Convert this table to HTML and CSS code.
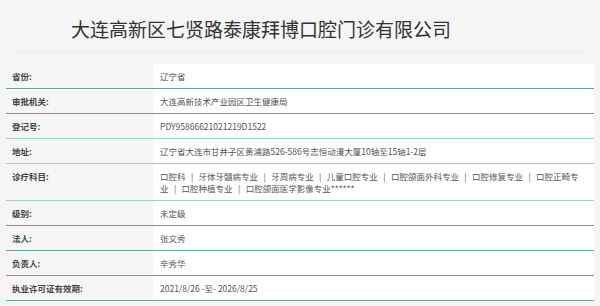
FILE: index.html
```html
<!DOCTYPE html>
<html lang="zh-CN">
<head>
<meta charset="utf-8">
<title>大连高新区七贤路泰康拜博口腔门诊有限公司</title>
<link rel="stylesheet" href="styles.css">
</head>
<body>
<div class="page">
  <header class="head">
    <h1 class="title">大连高新区七贤路泰康拜博口腔门诊有限公司</h1>
  </header>
  <table class="info">
    <tr><th>省份:</th><td>辽宁省</td></tr>
    <tr><th>审批机关:</th><td>大连高新技术产业园区卫生健康局</td></tr>
    <tr class="soft"><th>登记号:</th><td>PDY95866621021219D1522</td></tr>
    <tr class="soft"><th>地址:</th><td>辽宁省大连市甘井子区黄浦路526-586号志恒动漫大厦10轴至15轴1-2层</td></tr>
    <tr class="soft"><th>诊疗科目:</th><td>口腔科<span class="sep">|</span>牙体牙髓病专业<span class="sep">|</span>牙周病专业<span class="sep">|</span>儿童口腔专业<span class="sep">|</span>口腔颌面外科专业<span class="sep">|</span>口腔修复专业<span class="sep">|</span>口腔正畸专业<span class="sep">|</span>口腔种植专业<span class="sep">|</span>口腔颌面医学影像专业******</td></tr>
    <tr><th>级别:</th><td>未定级</td></tr>
    <tr><th>法人:</th><td>张文秀</td></tr>
    <tr><th>负责人:</th><td>辛秀华</td></tr>
    <tr><th>执业许可证有效期:</th><td>2021/8/26 -至- 2026/8/25</td></tr>
  </table>
</div>
</body>
</html>
```

FILE: styles.css
```css
html, body {
  margin: 0;
  padding: 0;
  background: #f5f5f5;
}
body {
  font-family: "Noto Sans CJK SC", "Noto Sans", sans-serif;
  color: #333;
}
.page {
  padding: 0 6px;
}
.head {
  margin: 0 10px;
  height: 51px;
  border-bottom: 1px solid #ececec;
  display: flex;
  align-items: center;
  justify-content: center;
  padding-right: 78px;
}
.title {
  margin: 0;
  font-size: 19px;
  line-height: 22px;
  font-weight: 400;
  color: #333;
  padding-top: 7px;
}
.info {
  margin-top: 12px;
  width: 100%;
  border-collapse: collapse;
  font-size: 8.5px;
  line-height: 12px;
}
.info th {
  width: 147px;
  box-sizing: border-box;
  text-align: left;
  font-weight: 700;
  color: #444;
  padding: 6px 6px;
  background: #f6f6f6;
  border-bottom: 1px solid #6aa584;
  vertical-align: top;
}
.info td {
  padding: 6px 15px 6px 7px;
  background: #fff;
  color: #555;
  border-bottom: 1px solid #6aa584;
  vertical-align: top;
}
.sep {
  margin: 0 5.4px;
  color: #555;
}
.info tr.soft th,
.info tr.soft td {
  border-bottom-color: #a8cfbf;
}
```
